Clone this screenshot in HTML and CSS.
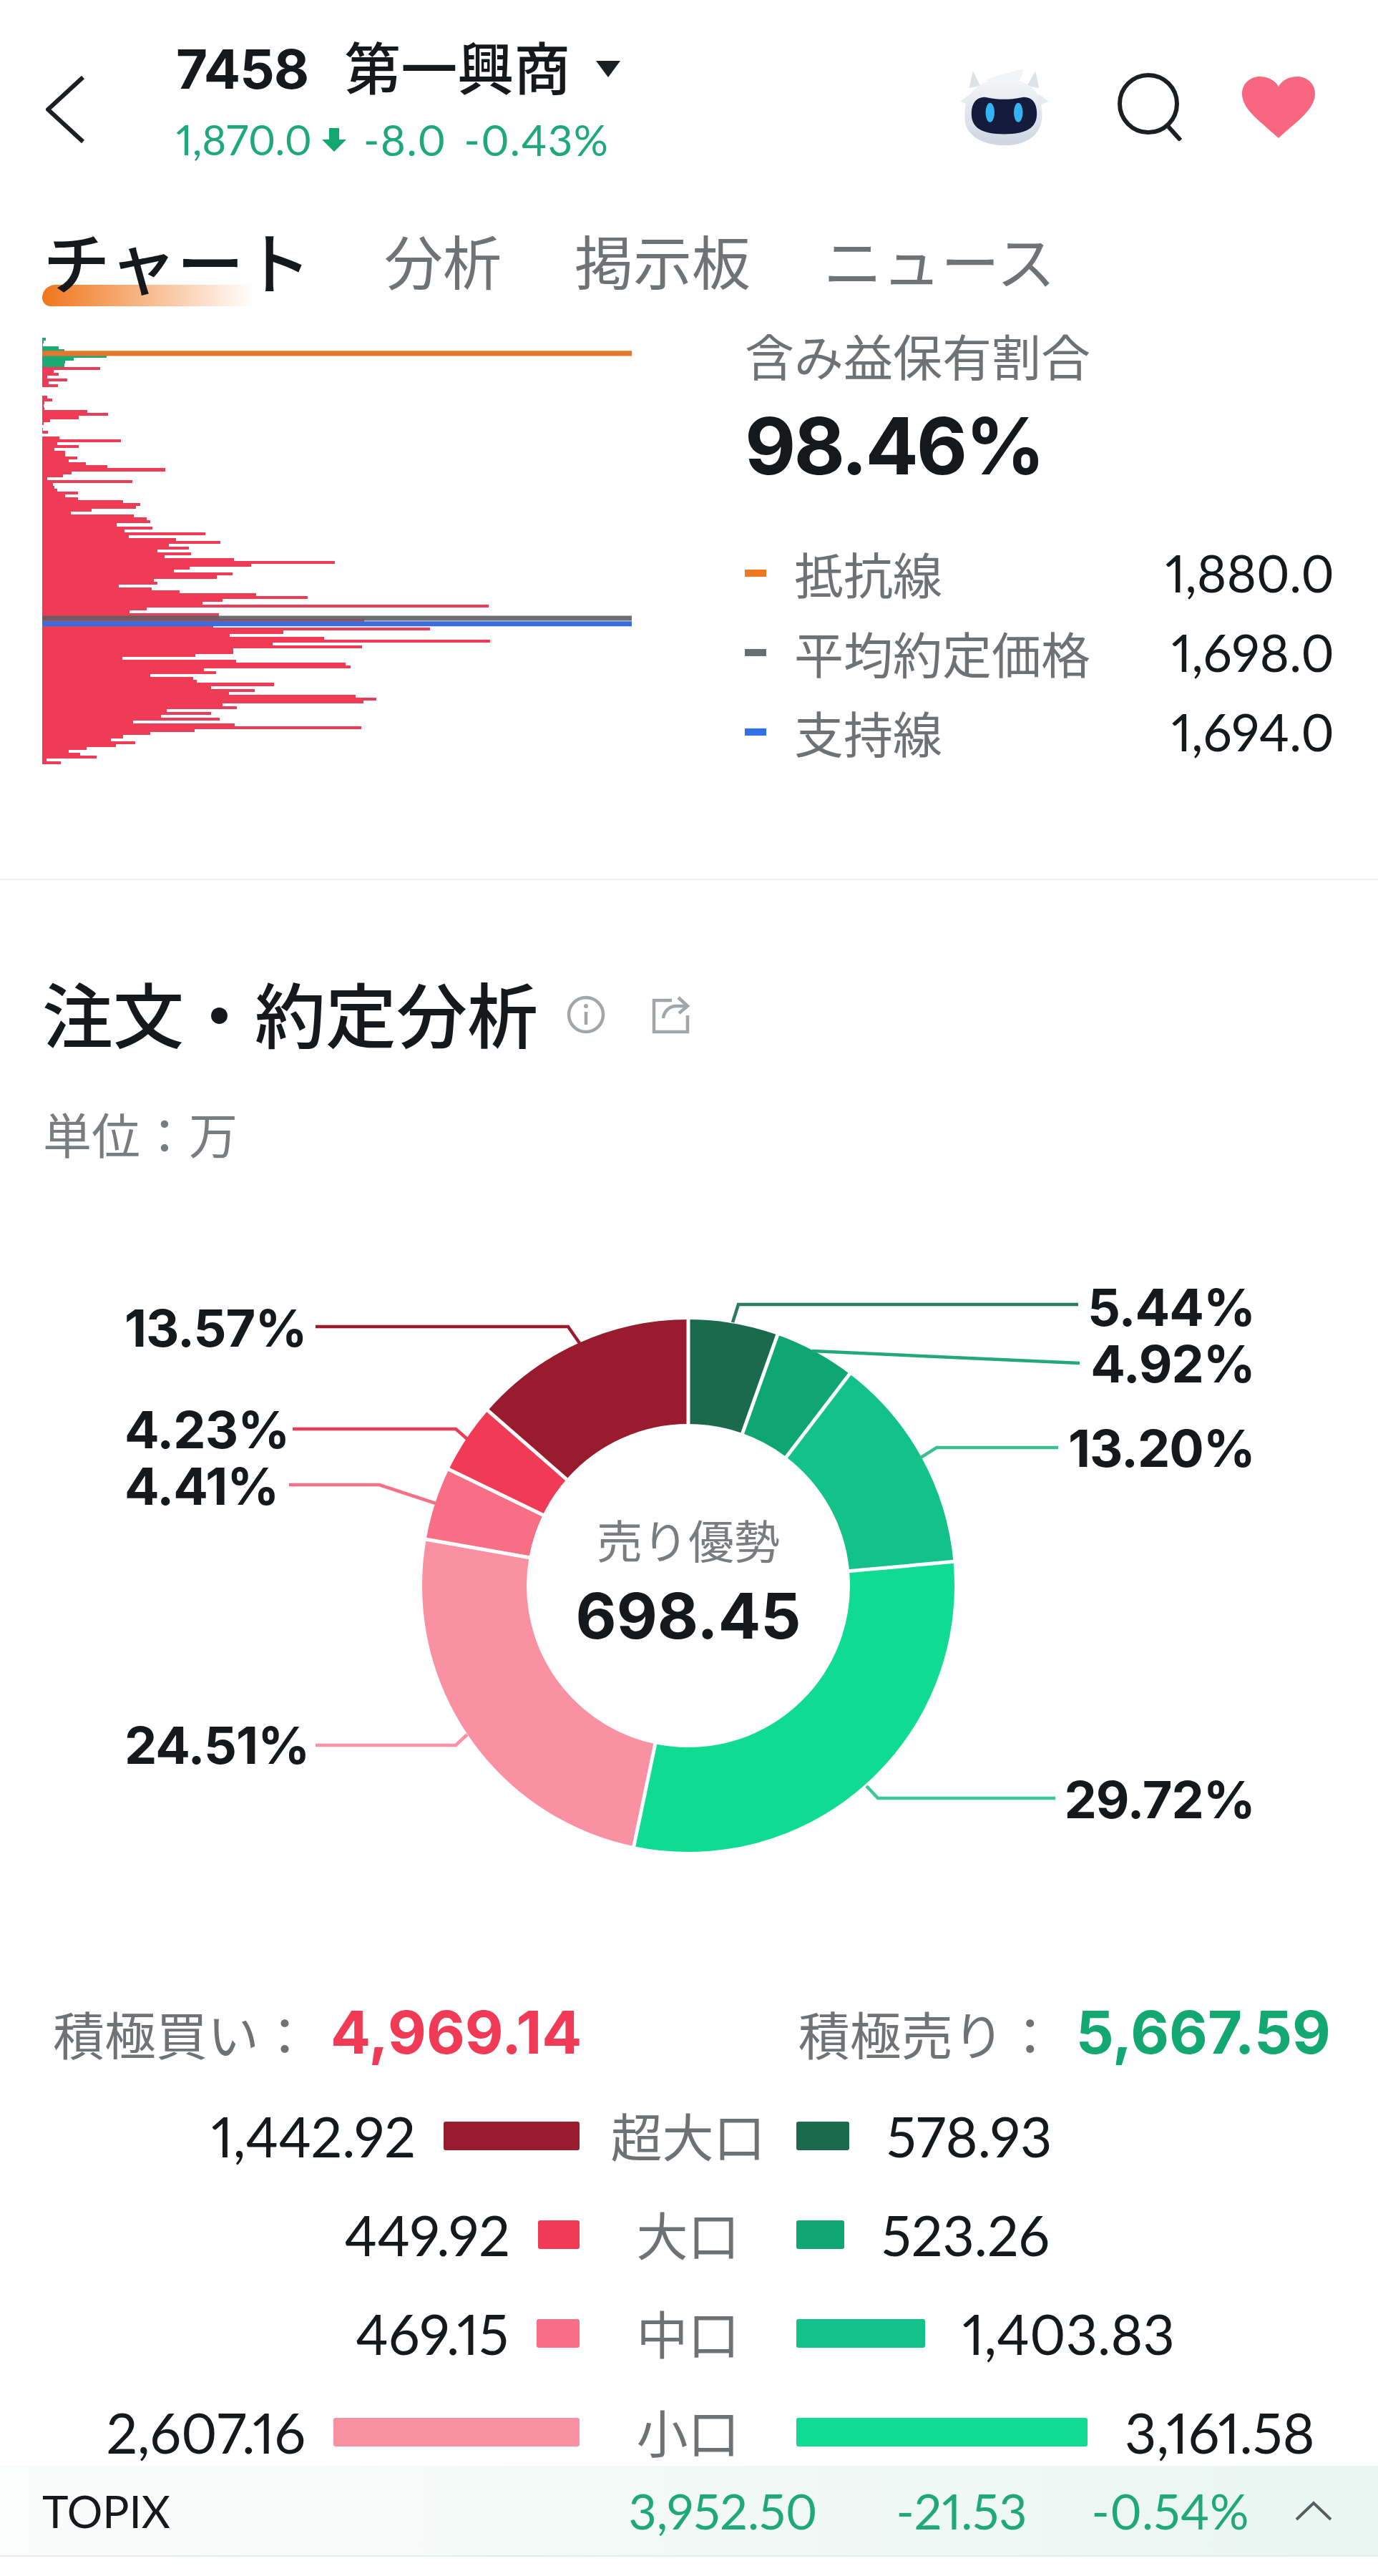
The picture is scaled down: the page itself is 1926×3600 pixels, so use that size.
FILE: index.html
```html
<!DOCTYPE html>
<html lang="ja">
<head>
  <meta charset="UTF-8">
  <title>7458 第一興商</title>
  <link rel="stylesheet" href="styles.css">
</head>
<body>
  <div class="page">
    <header class="topbar">
      <svg class="back" viewBox="0 0 56 96"><path d="M52 3 3 48l49 45" fill="none" stroke="#1c1f22" stroke-width="6"/></svg>
      <div class="stock">
        <div class="stock-name">
          <span class="stock-code">7458</span>
          <span class="stock-title">第一興商</span>
          <span class="caret"></span>
        </div>
        <div class="stock-price">
          <span class="price">1,870.0</span>
          <svg class="down" viewBox="0 0 34 33"><path d="M10 0h14v16h10L17 33 0 16h10z" fill="#12a870"/></svg>
          <span class="change">-8.0</span>
          <span class="change-rate">-0.43%</span>
        </div>
      </div>
      <div class="top-icons">
        <svg class="robot" viewBox="0 0 119 103">
          <defs>
            <linearGradient id="shell" x1="0" y1="0" x2="0" y2="1">
              <stop offset="0" stop-color="#f4f5f8"/>
              <stop offset="1" stop-color="#cfd6e2"/>
            </linearGradient>
          </defs>
          <path d="M12 26 17 3l10 20zM106 26 101 3 90 23z" fill="#dde1e8"/>
          <path d="M0 44 14 34v16zM119 44l-14-10v16z" fill="#e6e9ef"/>
          <path d="M6 62C6 30 28 14 60 14c32 0 50 16 50 48 0 28-22 41-50 41C30 103 4 90 6 62z" fill="url(#shell)"/>
          <path d="M34 16C46 8 68 6 84 0c0 8-2 14-8 18-14 4-30 2-42-2z" fill="#f3f4f6"/>
          <path d="M15 60c0-16 10-24 22-21 14 3 30 3 44 0 13-3 22 5 22 21 0 20-14 28-44 28S15 80 15 60z" fill="#141b3d"/>
          <ellipse cx="40" cy="59" rx="6" ry="13" fill="#35b4f5"/>
          <ellipse cx="78" cy="59" rx="6" ry="13" fill="#35b4f5"/>
        </svg>
        <svg class="search" viewBox="0 0 90 95">
          <circle cx="43" cy="43" r="40" fill="none" stroke="#1c1f22" stroke-width="6"/>
          <path d="M71 75 88 94" stroke="#1c1f22" stroke-width="6" fill="none"/>
        </svg>
        <svg class="heart" viewBox="0 0 102 86"><path d="M51 86C25 62 0 46 0 24 0 9 12 0 25 0c11 0 21 5 26 14C56 5 66 0 77 0c13 0 25 9 25 24 0 22-25 38-51 62z" fill="#f9667f"/></svg>
      </div>
    </header>

    <nav class="tabs">
      <span class="tab active">チャート</span>
      <span class="tab">分析</span>
      <span class="tab">掲示板</span>
      <span class="tab">ニュース</span>
    </nav>

    <section class="holding">
      <svg class="profile" viewBox="0 0 824 147" preserveAspectRatio="none">
        <path shape-rendering="crispEdges" stroke="#1ea874" fill="none" d="M0 .5h5M0 1.5h2M0 2.5h1M0 3.5h23M0 4.5h31M0 5.5h31M0 6.5h90M0 7.5h44M0 8.5h32M0 9.5h31"/>
        <path shape-rendering="crispEdges" stroke="#f03b57" fill="none" d="M0 10.5h81M0 11.5h16M0 12.5h23M0 13.5h7M0 14.5h35M0 15.5h9M0 16.5h22M0 20.5h7M0 21.5h14M0 22.5h3M0 23.5h2M0 24.5h3M0 25.5h63M0 26.5h92M0 27.5h51M0 28.5h11M0 29.5h2M0 31.5h1M0 32.5h8M0 34.5h24M0 35.5h110M0 36.5h21M0 37.5h51M0 38.5h17M0 39.5h32M0 40.5h32M0 41.5h49M0 42.5h37M0 43.5h61M0 44.5h91M0 45.5h172M0 46.5h41M0 47.5h29M0 48.5h7M0 49.5h126M0 50.5h15M0 51.5h17M0 52.5h21M0 53.5h50M0 54.5h32M0 55.5h50M0 56.5h113M0 57.5h137M0 58.5h131M0 59.5h69M0 60.5h40M0 61.5h128M0 62.5h146M0 63.5h151M0 64.5h104M0 65.5h154M0 66.5h115M0 67.5h228M0 68.5h121M0 69.5h187M0 70.5h249M0 71.5h177M0 72.5h205M0 73.5h161M0 74.5h208M0 75.5h171M0 76.5h268M0 77.5h409M0 78.5h292M0 79.5h206M0 80.5h184M0 81.5h266M0 82.5h244M0 83.5h156M0 84.5h161M0 85.5h107M0 86.5h153M0 87.5h192M0 88.5h299M0 89.5h371M0 90.5h252M0 91.5h224M0 92.5h624M0 93.5h146M0 94.5h122M0 95.5h247M0 96.5h247M0 97.5h450M0 98.5h450M0 99.5h239M0 100.5h542M0 101.5h337M0 102.5h262M0 103.5h394M0 104.5h626M0 105.5h322M0 106.5h447M0 107.5h267M0 108.5h267M0 109.5h214M0 110.5h112M0 111.5h271M0 112.5h424M0 113.5h431M0 114.5h226M0 115.5h243M0 116.5h151M0 117.5h211M0 118.5h216M0 119.5h324M0 120.5h236M0 121.5h297M0 122.5h261M0 123.5h438M0 124.5h467M0 125.5h449M0 126.5h252M0 127.5h272M0 128.5h174M0 129.5h236M0 130.5h166M0 131.5h248M0 132.5h127M0 133.5h269M0 134.5h446M0 135.5h213M0 136.5h151M0 137.5h113M0 138.5h96M0 139.5h130M0 140.5h103M0 141.5h62M0 142.5h37M0 143.5h53M0 144.5h76M0 145.5h6M0 146.5h26"/>
        <path d="M0 5.4h824" stroke="#e3782c" stroke-width="1.75"/>
        <path d="M0 96.7h824" stroke="#5f6264" stroke-opacity=".92" stroke-width="1.75"/>
        <path d="M0 98.6h824" stroke="#3a6cdc" stroke-width="1.75"/>
      </svg>
      <div class="holding-info">
        <div class="holding-label">含み益保有割合</div>
        <div class="holding-value">98.46%</div>
        <div class="legend">
          <div class="legend-row"><i class="dash dash-orange"></i><span class="legend-name">抵抗線</span><span class="legend-value">1,880.0</span></div>
          <div class="legend-row"><i class="dash dash-gray"></i><span class="legend-name">平均約定価格</span><span class="legend-value">1,698.0</span></div>
          <div class="legend-row"><i class="dash dash-blue"></i><span class="legend-name">支持線</span><span class="legend-value">1,694.0</span></div>
        </div>
      </div>
    </section>

    <section class="orders">
      <div class="orders-head">
        <h2>注文・約定分析</h2>
        <svg class="info" viewBox="0 0 54 56">
          <circle cx="27" cy="28" r="24" fill="none" stroke="#a3a6a9" stroke-width="4.5"/>
          <circle cx="27" cy="16" r="3" fill="#a3a6a9"/>
          <path d="M27 24v18" stroke="#a3a6a9" stroke-width="4.5"/>
        </svg>
        <svg class="share" viewBox="0 0 54 54">
          <path d="M28 7H3v44h47V28" fill="none" stroke="#a3a6a9" stroke-width="4.5"/>
          <path d="M16 32c1-10 9-17 18-17h15M37 3l13 12-12 10" fill="none" stroke="#a3a6a9" stroke-width="4.5"/>
        </svg>
      </div>
      <div class="unit">単位：万</div>

      <svg class="donut" viewBox="0 1760 1926 880">
        <g fill="none" stroke-width="146" transform="rotate(-90 962 2216)">
          <circle cx="962" cy="2216" r="299" pathLength="100" stroke="#1b6a4e" stroke-dasharray="5.44 100"/>
          <circle cx="962" cy="2216" r="299" pathLength="100" stroke="#0ea672" stroke-dasharray="4.92 100" stroke-dashoffset="-5.44"/>
          <circle cx="962" cy="2216" r="299" pathLength="100" stroke="#12c288" stroke-dasharray="13.2 100" stroke-dashoffset="-10.36"/>
          <circle cx="962" cy="2216" r="299" pathLength="100" stroke="#0fdb92" stroke-dasharray="29.72 100" stroke-dashoffset="-23.56"/>
          <circle cx="962" cy="2216" r="299" pathLength="100" stroke="#fa91a3" stroke-dasharray="24.51 100" stroke-dashoffset="-53.28"/>
          <circle cx="962" cy="2216" r="299" pathLength="100" stroke="#f76e85" stroke-dasharray="4.41 100" stroke-dashoffset="-77.79"/>
          <circle cx="962" cy="2216" r="299" pathLength="100" stroke="#f03a56" stroke-dasharray="4.23 100" stroke-dashoffset="-82.2"/>
          <circle cx="962" cy="2216" r="299" pathLength="100" stroke="#981c2e" stroke-dasharray="13.57 100" stroke-dashoffset="-86.43"/>
        </g>
        <g stroke="#fff" stroke-width="5">
          <path d="M962 1840v152"/>
          <path d="M962 1840v152" transform="rotate(19.58 962 2216)"/>
          <path d="M962 1840v152" transform="rotate(37.3 962 2216)"/>
          <path d="M962 1840v152" transform="rotate(84.82 962 2216)"/>
          <path d="M962 1840v152" transform="rotate(191.81 962 2216)"/>
          <path d="M962 1840v152" transform="rotate(280.04 962 2216)"/>
          <path d="M962 1840v152" transform="rotate(295.92 962 2216)"/>
          <path d="M962 1840v152" transform="rotate(311.15 962 2216)"/>
        </g>
        <g fill="none" stroke-width="4.5">
          <path d="M441 1854H794L810 1877" stroke="#9a1c2e"/>
          <path d="M409 1997H637L653 2011" stroke="#f03b56"/>
          <path d="M404 2075H530L609 2101" stroke="#f87086"/>
          <path d="M441 2439H637L653 2424" stroke="#fb92a3"/>
          <path d="M1507 1823H1032L1024 1848" stroke="#2a7c5f"/>
          <path d="M1509 1905 1135 1888" stroke="#22a87a"/>
          <path d="M1479 2023H1309L1287 2037" stroke="#3cbf90"/>
          <path d="M1475 2513H1227L1211 2496" stroke="#3cc799"/>
        </g>
        <text class="pct" x="174" y="1882">13.57%</text>
        <text class="pct" x="174" y="2024">4.23%</text>
        <text class="pct" x="174" y="2103">4.41%</text>
        <text class="pct" x="174" y="2465">24.51%</text>
        <text class="pct end" x="1754" y="1853">5.44%</text>
        <text class="pct end" x="1754" y="1932">4.92%</text>
        <text class="pct end" x="1754" y="2050">13.20%</text>
        <text class="pct end" x="1754" y="2541">29.72%</text>
        <text class="center-label" x="962" y="2178">売り優勢</text>
        <text class="center-value" x="962" y="2290">698.45</text>
      </svg>

      <div class="totals">
        <div class="total"><span class="total-label">積極買い：</span><span class="total-value buy">4,969.14</span></div>
        <div class="total"><span class="total-label">積極売り：</span><span class="total-value sell">5,667.59</span></div>
      </div>

      <div class="flow-rows">
        <div class="flow-row">
          <div class="flow-left"><span>1,442.92</span><i class="bar" style="width:190px;background:#981c2e"></i></div>
          <div class="flow-name">超大口</div>
          <div class="flow-right"><i class="bar" style="width:74px;background:#1b6a4e"></i><span>578.93</span></div>
        </div>
        <div class="flow-row">
          <div class="flow-left"><span>449.92</span><i class="bar" style="width:58px;background:#f03a56"></i></div>
          <div class="flow-name">大口</div>
          <div class="flow-right"><i class="bar" style="width:67px;background:#0ea672"></i><span>523.26</span></div>
        </div>
        <div class="flow-row">
          <div class="flow-left"><span>469.15</span><i class="bar" style="width:60px;background:#f76e85"></i></div>
          <div class="flow-name">中口</div>
          <div class="flow-right"><i class="bar" style="width:180px;background:#12c288"></i><span>1,403.83</span></div>
        </div>
        <div class="flow-row">
          <div class="flow-left"><span>2,607.16</span><i class="bar" style="width:344px;background:#fa91a3"></i></div>
          <div class="flow-name">小口</div>
          <div class="flow-right"><i class="bar" style="width:407px;background:#0fdb92"></i><span>3,161.58</span></div>
        </div>
      </div>
    </section>

    <footer class="index-bar">
      <span class="index-name">TOPIX</span>
      <span class="index-price">3,952.50</span>
      <span class="index-change">-21.53</span>
      <span class="index-rate">-0.54%</span>
      <svg class="chevron" viewBox="0 0 52 28"><path d="M2 26 26 3l24 23" fill="none" stroke="#5a5d60" stroke-width="4"/></svg>
    </footer>
  </div>
</body>
</html>
```

FILE: styles.css
```css
* {
  box-sizing: border-box;
}
body {
  margin: 0;
  background: #fff;
  color: #16191c;
  font-family: Lato, 'Noto Sans CJK JP', sans-serif;
  font-variant-numeric: proportional-nums;
}
.page {
  width: 1926px;
  height: 3600px;
  overflow: hidden;
}

/* header */
.topbar {
  display: flex;
  align-items: flex-start;
  height: 244px;
  padding: 46px 88px 0 64px;
}
.back {
  width: 56px;
  height: 96px;
  margin: 59px 126px 0 0;
}
.stock-name {
  display: flex;
  align-items: center;
  height: 100px;
}
.stock-code {
  font-family: Inter, sans-serif;
  font-size: 76px;
  font-weight: 700;
  letter-spacing: -1px;
  line-height: 100px;
}
.stock-title {
  margin: -8px 0 0 50px;
  font-family: 'Noto Sans CJK JP', sans-serif;
  font-size: 79px;
  font-weight: 500;
  line-height: 100px;
}
.caret {
  width: 0;
  height: 0;
  margin-left: 36px;
  border-left: 17px solid transparent;
  border-right: 17px solid transparent;
  border-top: 23px solid #1c1f22;
}
.stock-price {
  display: flex;
  align-items: center;
  height: 98px;
  color: #1fa878;
  font-size: 58px;
  line-height: 98px;
}
.down {
  width: 34px;
  height: 33px;
  margin-left: 14px;
}
.change,
.change-rate {
  font-size: 60px;
  letter-spacing: 1.5px;
}
.change {
  margin-left: 24px;
}
.change-rate {
  margin-left: 24px;
}
.top-icons {
  display: flex;
  align-items: center;
  height: 103px;
  margin: 52px 0 0 auto;
}
.robot {
  width: 124px;
  height: 107px;
}
.search {
  width: 90px;
  height: 95px;
  margin-left: 96px;
}
.heart {
  width: 102px;
  height: 86px;
  margin-left: 84px;
}

/* tabs */
.tabs {
  display: flex;
  gap: 102px;
  margin-top: 69px;
  padding: 0 0 4px 60px;
  font-family: 'Noto Sans CJK JP', sans-serif;
}
.tab {
  position: relative;
  color: #707376;
  font-size: 82px;
  line-height: 100px;
}
.tab.active {
  color: #16191c;
  font-size: 94px;
  font-weight: 500;
}
.tab.active::after {
  content: "";
  position: absolute;
  left: -1px;
  top: 85px;
  z-index: -1;
  width: 297px;
  height: 30px;
  border-radius: 22px 0 0 14px;
  background: linear-gradient(90deg, #f0761c, rgba(240, 118, 28, 0));
}

/* holding */
.holding {
  display: flex;
  height: 813px;
  padding: 44px 0 0 59px;
  border-bottom: 2px solid #f1f2f3;
}
.profile {
  width: 824px;
  height: 596px;
  margin-top: 11px;
}
.holding-info {
  width: 824px;
  margin-left: 158px;
}
.holding-label {
  color: #6f7275;
  font-family: 'Noto Sans CJK JP', sans-serif;
  font-size: 69px;
  line-height: 70px;
}
.holding-value {
  margin-top: 32px;
  font-family: Inter, sans-serif;
  font-size: 110px;
  font-weight: 700;
  letter-spacing: -3px;
  line-height: 120px;
}
.legend {
  margin-top: 62px;
}
.legend-row {
  display: flex;
  align-items: center;
  height: 111px;
}
.dash {
  width: 30px;
  height: 10px;
  margin-right: 39px;
}
.dash-orange {
  background: #ee7720;
}
.dash-gray {
  background: #6b6e71;
}
.dash-blue {
  background: #2f73e6;
}
.legend-name {
  color: #6f7275;
  font-family: 'Noto Sans CJK JP', sans-serif;
  font-size: 69px;
}
.legend-value {
  margin-left: auto;
  font-size: 71px;
}

/* orders */
.orders-head {
  display: flex;
  align-items: center;
  padding: 129px 0 0 59px;
}
.orders-head h2 {
  margin: 0 0 8px;
  font-family: 'Noto Sans CJK JP', sans-serif;
  font-size: 99px;
  font-weight: 500;
  line-height: 110px;
}
.info {
  width: 54px;
  height: 56px;
  margin-left: 40px;
}
.share {
  width: 54px;
  height: 54px;
  margin-left: 65px;
}
.unit {
  margin-top: 67px;
  padding-left: 60px;
  color: #7a7d80;
  font-family: 'Noto Sans CJK JP', sans-serif;
  font-size: 68px;
  line-height: 80px;
}
.donut {
  display: block;
  width: 1926px;
  height: 880px;
  margin-top: 136px;
}
.pct {
  fill: #16191c;
  font-family: Inter, sans-serif;
  font-size: 72px;
  font-weight: 700;
  letter-spacing: -1px;
}
.pct.end {
  text-anchor: end;
}
.center-label {
  fill: #7a7d80;
  font-family: 'Noto Sans CJK JP', sans-serif;
  font-size: 64px;
  text-anchor: middle;
}
.center-value {
  fill: #16191c;
  font-family: Inter, sans-serif;
  font-size: 88px;
  font-weight: 700;
  text-anchor: middle;
}
.totals {
  display: flex;
  justify-content: space-between;
  margin-top: 150px;
  padding: 0 66px 0 74px;
}
.total {
  display: flex;
  align-items: center;
  height: 100px;
}
.total-label {
  margin-right: 28px;
  color: #707376;
  font-family: 'Noto Sans CJK JP', sans-serif;
  font-size: 72px;
}
.total-value {
  font-family: Inter, sans-serif;
  font-size: 83px;
  font-weight: 700;
}
.buy {
  color: #f03a56;
}
.sell {
  color: #13a872;
}
.flow-rows {
  display: flex;
  flex-direction: column;
  gap: 46px;
  margin-top: 44px;
}
.flow-row {
  display: grid;
  grid-template-columns: 810px 303px 1fr;
  align-items: center;
  height: 92px;
  font-size: 77px;
}
.flow-left {
  display: flex;
  justify-content: flex-end;
  align-items: center;
  gap: 39px;
}
.flow-right {
  display: flex;
  align-items: center;
  gap: 52px;
}
.flow-name {
  margin-top: -4px;
  color: #6f7275;
  font-family: 'Noto Sans CJK JP', sans-serif;
  font-size: 72px;
  text-align: center;
}
.bar {
  height: 40px;
  border-radius: 3px;
}

/* index bar */
.index-bar {
  display: flex;
  align-items: center;
  height: 127px;
  margin-top: 6px;
  padding: 0 64px 0 59px;
  border-bottom: 2px solid #e8eaeb;
  background: linear-gradient(90deg, #fbfdfc, #e9f6f1);
  font-size: 68px;
}
.index-name {
  margin-right: auto;
  font-size: 62px;
}
.index-price,
.index-change,
.index-rate {
  color: #21a87a;
}
.index-change {
  margin-left: 110px;
}
.index-rate {
  margin-left: 90px;
  letter-spacing: .5px;
}
.chevron {
  width: 52px;
  height: 28px;
  margin-left: 64px;
}
```
